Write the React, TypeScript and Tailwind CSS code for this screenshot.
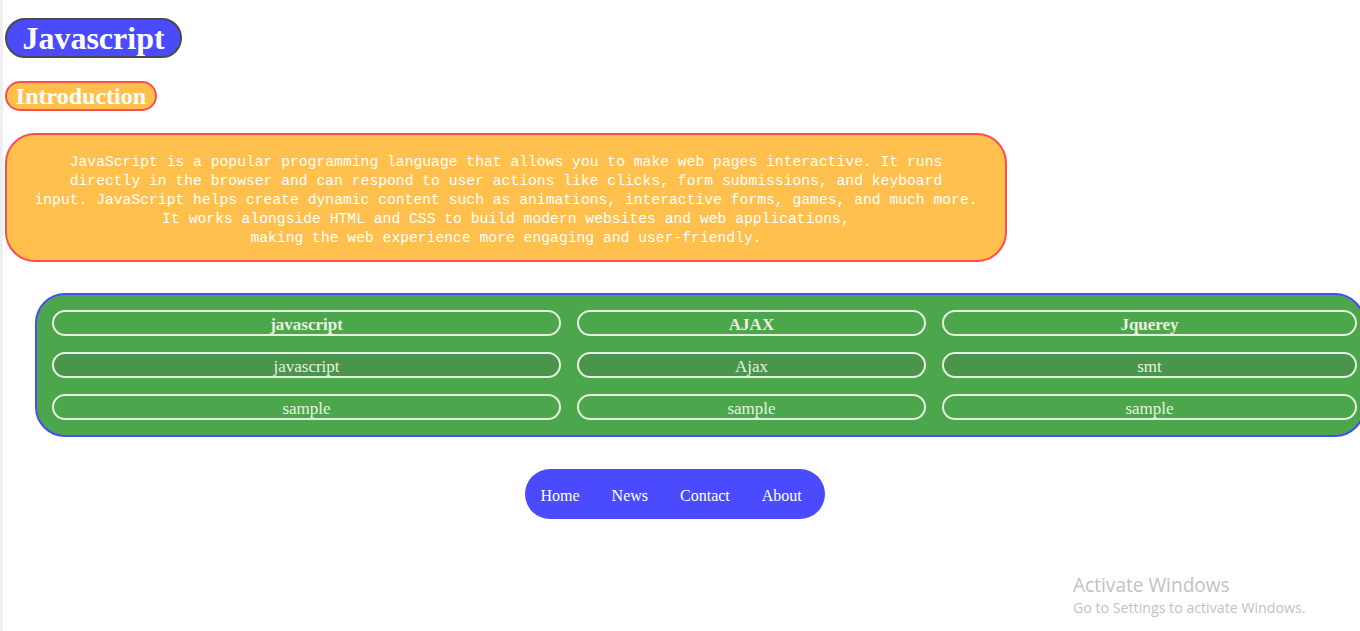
const serif = { fontFamily: '"Liberation Serif", "Times New Roman", serif' };

const rows = [
  { cells: ['javascript', 'AJAX', 'Jquerey'], bold: true, dark: false },
  { cells: ['javascript', 'Ajax', 'smt'], bold: false, dark: true },
  { cells: ['sample', 'sample', 'sample'], bold: false, dark: false },
];

const lines = [
  'JavaScript is a popular programming language that allows you to make web pages interactive. It runs',
  'directly in the browser and can respond to user actions like clicks, form submissions, and keyboard',
  'input. JavaScript helps create dynamic content such as animations, interactive forms, games, and much more.',
  'It works alongside HTML and CSS to build modern websites and web applications,',
  'making the web experience more engaging and user-friendly.',
];

function App() {
  return (
    <div className="relative h-[631px] w-[1360px] overflow-hidden bg-white border-l-[3px] border-[#efefef]" style={serif}>
      {/* titulo */}
      <div className="pl-[2px] pt-[18px]">
        <h1 className="inline-flex h-[40px] w-[177px] items-center justify-center rounded-full border-2 border-[#4a4a4a] bg-[#4a4aff] text-[32px] font-bold leading-none text-white">
          Javascript
        </h1>
      </div>

      <div className="pl-[2px] pt-[23px]">
        <h2 className="inline-flex h-[30px] w-[152px] items-center justify-center rounded-full border-2 border-[#ff4d4d] bg-[#ffc04d] text-[24px] font-bold leading-none text-white">
          Introduction
        </h2>
      </div>

      {/* paragrafo */}
      <div className="pl-[2px] pt-[22px]">
        <p
          className="flex h-[129px] w-[1002px] flex-col items-center justify-center rounded-[30px] border-2 border-[#ff4d4d] bg-[#ffc04d] pt-[5px] text-center text-[14.7px] leading-[19px] whitespace-nowrap text-white"
          style={{ fontFamily: '"Liberation Mono", "DejaVu Sans Mono", monospace' }}
        >
          {lines.map((l) => (
            <span key={l}>{l}</span>
          ))}
        </p>
      </div>

      {/* tabela verde */}
      <div className="pl-[32px] pt-[31px]">
        <div className="w-[1330px] rounded-[30px] border-2 border-[#4a4aff] bg-[#4ca64c] py-[15px] pl-[15px]">
          <div className="grid grid-cols-[509px_349px_415px] gap-x-[16px] gap-y-[16px]">
            {rows.map((r, i) =>
              r.cells.map((c, j) => (
                <div
                  key={`${i}-${j}`}
                  className={`flex h-[26px] items-center justify-center rounded-full border-2 border-[#e6f0e0] pt-[2px] text-[17px] leading-none text-[#e8f2e0] ${
                    r.dark ? 'bg-[#4a944c]' : 'bg-[#4ca64c]'
                  } ${r.bold ? 'font-bold' : ''}`}
                >
                  {c}
                </div>
              )),
            )}
          </div>
        </div>
      </div>

      {/* navegacao */}
      <div className="flex justify-center pt-[32px] pr-[14px]">
        <nav className="flex h-[50px] w-[300px] items-center rounded-full bg-[#4a4aff] pt-[3px] text-[16px] font-medium text-white">
          {['Home', 'News', 'Contact', 'About'].map((n) => (
            <a key={n} href="#" className="px-[16px]">
              {n}
            </a>
          ))}
        </nav>
      </div>

      {/* marca d'agua do windows */}
      <div
        className="absolute left-[1070px] top-[573px] text-[#c2c2c2]"
        style={{ fontFamily: '"Open Sans", "Noto Sans", sans-serif' }}
      >
        <div className="text-[19.1px] leading-[24px]">Activate Windows</div>
        <div className="text-[14.2px] leading-[22px]">Go to Settings to activate Windows.</div>
      </div>
    </div>
  );
}

export default App;
